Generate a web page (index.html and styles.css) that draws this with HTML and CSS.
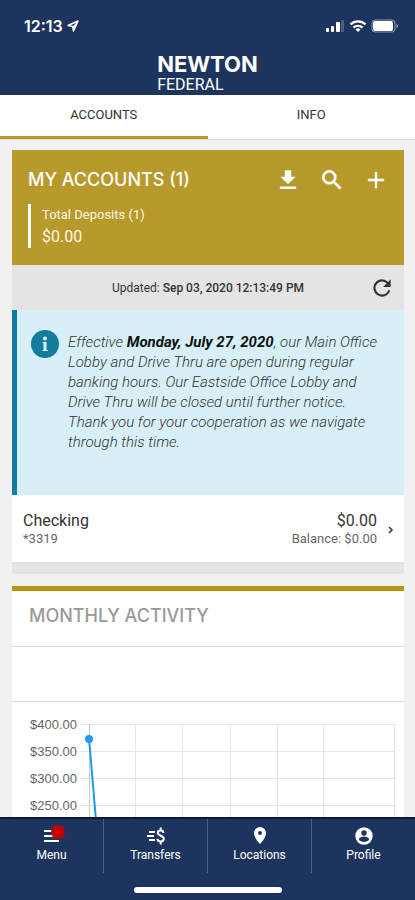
FILE: index.html
```html
<!DOCTYPE html>
<html lang="en">
<head>
    <meta charset="UTF-8">
    <meta name="viewport" content="width=device-width, initial-scale=1">
    <title>Newton Federal - Accounts</title>
    <link rel="stylesheet" href="styles.css">
</head>
<body>
    <div class="status-bar">
        <div class="status-time">
            <span>12:13</span>
            <svg width="12" height="12" viewBox="0 0 12 12"><path d="M11 1L1 5.5l4.6.9L6.5 11z" fill="none" stroke="#fff" stroke-width="1.5" stroke-linejoin="round"/><path d="M11 1L5.6 6.4 6.5 11z" fill="#fff"/></svg>
        </div>
        <div class="status-icons">
            <svg width="20" height="14" viewBox="0 0 20 14" fill="#fff">
                <rect x="1" y="9" width="3" height="4" rx="1"/>
                <rect x="6" y="7" width="3" height="6" rx="1"/>
                <rect x="11" y="3" width="4" height="10" rx="1"/>
                <rect x="16" y="1" width="3" height="12" rx="1" opacity=".2"/>
            </svg>
            <svg width="18" height="14" viewBox="0 0 18 14" fill="none" stroke="#fff" stroke-width="2.2">
                <path d="M1.5 5.4a10.6 10.6 0 0 1 15 0"/>
                <path d="M4.5 8.6a6.4 6.4 0 0 1 9 0"/>
                <path d="M6.5 10.6a3.5 3.5 0 0 1 5 0L9 13z" fill="#fff" stroke="none"/>
            </svg>
            <svg width="28" height="14" viewBox="0 0 28 14">
                <rect x="1" y="1" width="23" height="12" rx="3" fill="none" stroke="#fff" opacity=".5"/>
                <rect x="2" y="2" width="20" height="10" rx="2" fill="#fff"/>
                <path d="M25.5 5v4c2-.6 2-3.4 0-4z" fill="#fff" opacity=".5"/>
            </svg>
        </div>
    </div>

    <header class="header">
        <div class="logo">
            <span class="logo-name">NEWTON</span>
            <span class="logo-sub">FEDERAL</span>
        </div>
    </header>

    <nav class="tabs">
        <a href="#accounts" class="tab active">ACCOUNTS</a>
        <a href="#info" class="tab">INFO</a>
    </nav>

    <main class="content">
        <section class="card accounts" id="accounts">
            <div class="summary">
                <div class="summary-top">
                    <h2>MY ACCOUNTS (1)</h2>
                    <div class="actions">
                        <button type="button" aria-label="Download">
                            <svg width="26" height="26" viewBox="0 0 24 24" fill="#fff"><path d="M19 9h-4V3H9v6H5l7 7 7-7zM4.5 18v2.3h15V18z"/></svg>
                        </button>
                        <button type="button" aria-label="Search">
                            <svg width="26" height="26" viewBox="0 0 24 24" fill="#fff" stroke="#fff" stroke-width=".5"><path d="M15.5 14h-.79l-.28-.27A6.471 6.471 0 0 0 16 9.5 6.5 6.5 0 1 0 9.5 16c1.61 0 3.09-.59 4.23-1.57l.27.28v.79l5 4.99L20.49 19l-4.99-5zm-6 0C7.01 14 5 11.99 5 9.5S7.01 5 9.5 5 14 7.01 14 9.5 11.99 14 9.5 14z"/></svg>
                        </button>
                        <button type="button" aria-label="Add account">
                            <svg width="26" height="26" viewBox="0 0 24 24" fill="#fff"><path d="M19.5 13.1h-6.4v6.4h-2.2v-6.4H4.5v-2.2h6.4V4.5h2.2v6.4h6.4z"/></svg>
                        </button>
                    </div>
                </div>
                <div class="deposits">
                    <span class="deposits-label">Total Deposits (1)</span>
                    <span class="deposits-value">$0.00</span>
                </div>
            </div>

            <div class="updated">
                <p>Updated: <b>Sep 03, 2020 12:13:49 PM</b></p>
                <button type="button" aria-label="Refresh">
                    <svg width="26" height="26" viewBox="0 0 24 24" fill="#333"><path d="M17.65 6.35A7.958 7.958 0 0 0 12 4a8 8 0 1 0 7.73 10h-2.08A5.99 5.99 0 0 1 12 18a6 6 0 1 1 0-12c1.66 0 3.14.69 4.22 1.78L13 11h7V4z"/></svg>
                </button>
            </div>

            <div class="notice">
                <svg class="notice-icon" width="28" height="28" viewBox="0 0 28 28"><circle cx="14" cy="14" r="14" fill="#137d9f"/><circle cx="14" cy="8.5" r="2" fill="#d7f0f7"/><path d="M11.5 12h4v8H17v1h-5.500v-1H12.500v-7h-1z" fill="#d7f0f7"/></svg>
                <p>Effective <b>Monday, July 27, 2020</b>, our Main Office Lobby and Drive Thru are open during regular banking hours. Our Eastside Office Lobby and Drive Thru will be closed until further notice. Thank you for your cooperation as we navigate through this time.</p>
            </div>

            <a href="#checking" class="account-row">
                <span class="account-col">
                    <span class="account-main">Checking</span>
                    <span class="account-small">*3319</span>
                </span>
                <span class="account-col right">
                    <span class="account-main">$0.00</span>
                    <span class="account-small">Balance: $0.00</span>
                </span>
                <svg width="6" height="8" viewBox="0 0 6 8" fill="none" stroke="#333" stroke-width="1.5"><path d="M1 1l3 3-3 3"/></svg>
            </a>
        </section>

        <section class="card activity">
            <h2>MONTHLY ACTIVITY</h2>
            <div class="activity-filter"></div>
            <svg class="chart" viewBox="0 0 392 240">
                <path class="grid" d="M68 22.5H382M68 49.5H382M68 76.5H382M68 103.5H382M68 130.5H382M68 157.5H382M68 184.5H382M68 211.5H382M123.5 22V211M170.5 22V211M218.5 22V211M265.5 22V211M311.5 22V211M382.5 22V211"/>
                <path class="axis" d="M77.5 22V220"/>
                <g class="labels">
                    <text x="65" y="27">$400.00</text>
                    <text x="65" y="54">$350.00</text>
                    <text x="65" y="81">$300.00</text>
                    <text x="65" y="108">$250.00</text>
                </g>
                <path class="line" d="M77 36L93 225"/>
                <circle cx="77" cy="37" r="4" fill="#1e9be9"/>
            </svg>
        </section>
    </main>

    <footer class="bottom">
        <nav class="bottom-nav">
            <a href="#menu">
                <span class="menu-icon">
                    <svg width="20" height="20" viewBox="0 0 20 20"><path d="M2 5h12M2 10h15M2 15h15" stroke="#fff" stroke-width="2"/></svg>
                    <span class="badge"></span>
                </span>
                Menu
            </a>
            <a href="#transfers">
                <svg width="20" height="20" viewBox="0 0 20 20" fill="none" stroke="#fff" stroke-width="2"><path d="M3 6h6M1 10h7M3 14h6"/><path d="M17.500 7C17.300 5.200 16.200 4.500 14.700 4.500c-1.700 0-2.900.8-2.900 2.300 0 3.500 6 2.400 6 6 0 1.700-1.300 2.700-3.100 2.700-1.800 0-3.100-.8-3.300-2.700M14.700 1.500v3M14.700 15.500v3"/></svg>
                Transfers
            </a>
            <a href="#locations">
                <svg width="20" height="20" viewBox="0 0 20 20" fill="#fff"><path fill-rule="evenodd" d="M10 1a6 6 0 0 0-6 6c0 5 6 11 6 11s6-6 6-11a6 6 0 0 0-6-6zm0 4a2 2 0 1 1 0 4 2 2 0 0 1 0-4z"/></svg>
                Locations
            </a>
            <a href="#profile">
                <svg width="20" height="20" viewBox="0 0 20 20"><circle cx="10" cy="10" r="8.7" fill="#fff"/><circle cx="10" cy="7" r="2.7" fill="#1d355e"/><path d="M4.8 13.2c.3-1.8 3.4-2.7 5.2-2.7s4.9.9 5.2 2.7a6.2 6.2 0 0 1-10.4 0z" fill="#1d355e"/></svg>
                Profile
            </a>
        </nav>
        <div class="home-bar"></div>
    </footer>
</body>
</html>
```

FILE: styles.css
```css
* {
    box-sizing: border-box;
}

body {
    margin: 0;
    height: 100vh;
    display: flex;
    flex-direction: column;
    overflow: hidden;
    background: #f1f1f2;
    color: #333;
    font-family: Roboto, Arial, sans-serif;
}

h2, p {
    margin: 0;
}

a {
    color: inherit;
    text-decoration: none;
}

svg {
    display: block;
}

button {
    padding: 0;
    border: none;
    background: none;
    cursor: pointer;
}

.status-bar {
    display: flex;
    justify-content: space-between;
    align-items: center;
    height: 51px;
    padding: 0 16px 0 24px;
    background: #1d355e;
    color: #fff;
    flex-shrink: 0;
}

.status-time {
    display: flex;
    align-items: center;
    gap: 4px;
    font-family: Inter, sans-serif;
    font-size: 16px;
    font-weight: 600;
}

.status-icons {
    display: flex;
    gap: 4px;
}

.header {
    display: flex;
    justify-content: center;
    height: 44px;
    background: #1d355e;
    color: #fff;
    flex-shrink: 0;
}

.logo {
    display: flex;
    flex-direction: column;
}

.logo-name {
    font-family: Inter, sans-serif;
    font-size: 22px;
    font-weight: 700;
    line-height: 26px;
}

.logo-sub {
    font-size: 16px;
    line-height: 16px;
}

.tabs {
    display: flex;
    height: 45px;
    background: #fff;
    border-bottom: 1px solid #ddd;
    flex-shrink: 0;
}

.tab {
    flex: 1;
    padding-top: 10px;
    border-bottom: 3px solid transparent;
    font-size: 13px;
    line-height: 20px;
    text-align: center;
}

.tab.active {
    border-color: #b8992b;
}

.content {
    flex: 1;
    min-height: 0;
    overflow: hidden;
    padding: 10px 11px 0 12px;
}

.card {
    margin-bottom: 12px;
    background: #fff;
}

.accounts {
    border-bottom: 12px solid #e3e3e3;
    border-radius: 0 0 3px 3px;
}

.summary {
    padding: 17px 16px;
    background: #b8992b;
    color: #fff;
}

.summary-top {
    display: flex;
    justify-content: space-between;
    align-items: center;
    height: 26px;
}

h2 {
    font-family: Inter, sans-serif;
    font-size: 18px;
    line-height: 26px;
    font-weight: 500;
}

.actions {
    display: flex;
    gap: 18px;
    margin-right: -1px;
}

.deposits {
    display: flex;
    flex-direction: column;
    margin-top: 11px;
    padding-left: 11px;
    border-left: 3px solid #fff;
    color: #fff8e4;
}

.deposits-label {
    font-size: 13px;
    line-height: 22px;
}

.deposits-value {
    font-size: 16px;
    line-height: 22px;
}

.updated {
    display: flex;
    align-items: center;
    height: 45px;
    padding: 0 9px;
    background: #e4e4e4;
    font-size: 12px;
}

.updated p {
    flex: 1;
    padding-left: 26px;
    text-align: center;
}

.updated b {
    font-weight: 500;
}

.notice {
    display: flex;
    align-items: flex-start;
    gap: 9px;
    min-height: 185px;
    padding: 20px 16px 20px 14px;
    background: #d7f0f7;
    border-left: 5px solid #137d9f;
}

.notice-icon {
    flex-shrink: 0;
}

.notice p {
    padding-top: 2px;
    font-size: 15px;
    line-height: 20px;
    font-style: italic;
    font-weight: 300;
}

.notice b {
    color: #111;
    font-weight: 700;
}

.account-row {
    display: flex;
    align-items: center;
    gap: 11px;
    height: 67px;
    padding: 2px 10px 0 11px;
}

.account-col {
    display: flex;
    flex-direction: column;
}

.account-col.right {
    margin-left: auto;
    text-align: right;
}

.account-main {
    font-size: 16px;
    line-height: 18px;
}

.account-small {
    color: #666;
    font-size: 13px;
    line-height: 18px;
}

.activity {
    border-top: 5px solid #b5940f;
}

.activity h2 {
    height: 56px;
    padding: 12px 17px;
    border-bottom: 1px solid #ddd;
    color: #999;
}

.activity-filter {
    height: 55px;
    border-bottom: 1px solid #ddd;
}

.chart {
    width: 100%;
}

.chart .grid {
    stroke: #e6e6e6;
}

.chart .axis {
    stroke: #c8c8c8;
}

.chart .labels {
    fill: #666;
    font-family: "Liberation Sans", Arial, sans-serif;
    font-size: 13px;
    text-anchor: end;
}

.chart .line {
    fill: none;
    stroke: #1e9be9;
    stroke-width: 2;
}

.bottom {
    height: 83px;
    background: #1d355e;
    border-top: 2px solid #0b1748;
    color: #fff;
    flex-shrink: 0;
}

.bottom-nav {
    display: flex;
    height: 54px;
}

.bottom-nav a {
    flex: 1;
    display: flex;
    flex-direction: column;
    align-items: center;
    padding-top: 7px;
    font-size: 12px;
    line-height: 19px;
    border-right: 1px solid #4a5f82;
}

.bottom-nav a:last-child {
    border-right: none;
}

.menu-icon {
    position: relative;
}

.badge {
    position: absolute;
    top: -1px;
    left: 9px;
    width: 14px;
    height: 14px;
    border-radius: 50%;
    background: #c40000;
}

.home-bar {
    width: 148px;
    height: 6px;
    margin: 14px auto 0;
    border-radius: 3px;
    background: #fff;
}
```
